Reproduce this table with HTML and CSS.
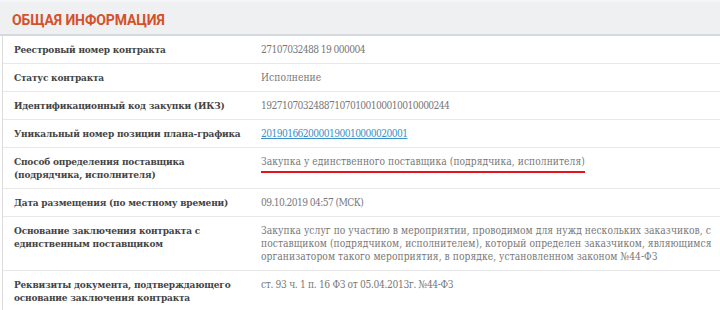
FILE: index.html
```html
<!DOCTYPE html>
<html lang="ru">
<head>
<meta charset="utf-8">
<title>Общая информация</title>
<link rel="stylesheet" href="styles.css">
</head>
<body>
<section class="card">
  <header class="card-head"><h2 class="card-title">ОБЩАЯ ИНФОРМАЦИЯ</h2></header>
  <div class="card-body">
    <div class="row">
      <div class="label">Реестровый номер контракта</div>
      <div class="value num">27107032488 19 000004</div>
    </div>
    <div class="row">
      <div class="label">Статус контракта</div>
      <div class="value">Исполнение</div>
    </div>
    <div class="row">
      <div class="label">Идентификационный код закупки (ИКЗ)</div>
      <div class="value num">192710703248871070100100010010000244</div>
    </div>
    <div class="row">
      <div class="label">Уникальный номер позиции плана-графика</div>
      <div class="value num"><a class="link" href="#">2019016620000190010000020001</a></div>
    </div>
    <div class="row">
      <div class="label">Способ определения поставщика<br>(подрядчика, исполнителя)</div>
      <div class="value"><span class="marked">Закупка у единственного поставщика (подрядчика, исполнителя)</span></div>
    </div>
    <div class="row">
      <div class="label">Дата размещения (по местному времени)</div>
      <div class="value num">09.10.2019 04:57 (МСК)</div>
    </div>
    <div class="row">
      <div class="label">Основание заключения контракта с<br>единственным поставщиком</div>
      <div class="value">Закупка услуг по участию в мероприятии, проводимом для нужд нескольких заказчиков, с<br>поставщиком (подрядчиком, исполнителем), который определен заказчиком, являющимся<br>организатором такого мероприятия, в порядке, установленном законом №44-ФЗ</div>
    </div>
    <div class="row">
      <div class="label">Реквизиты документа, подтверждающего<br>основание заключения контракта</div>
      <div class="value mixed">ст. 93 ч. 1 п. 16 ФЗ от 05.04.2013г. №44-ФЗ</div>
    </div>
  </div>
</section>
</body>
</html>
```
FILE: styles.css
```css
* { box-sizing: border-box; }
html, body { margin: 0; padding: 0; background: #ffffff; }
body { width: 720px; height: 310px; overflow: hidden; }

.card { width: 720px; }

.card-head {
  height: 36px;
  background: #eef0f2;
  border-top: 2px solid #f5f6f7;
  border-bottom: 2px solid #d6d9dd;
  display: flex;
  align-items: center;
  padding: 4px 12px 0;
}
.card-title {
  margin: 0;
  font-family: Roboto, "Noto Sans", sans-serif;
  font-weight: 700;
  font-size: 14px;
  color: #d4522a;
  letter-spacing: -0.1px;
}

.card-body {
  margin-left: 2px;
  border-left: 1px solid #dcdcdc;
}

.row {
  display: flex;
  border-bottom: 1px solid #e8e8e8;
  padding: 7px 0 7px;
  font-family: "DejaVu Serif", serif;
  font-stretch: condensed;
  font-size: 10.2px;
  line-height: 13px;
}

.label {
  width: 258px;
  flex: none;
  padding-left: 11px;
  font-weight: 700;
  font-size: 10px;
  letter-spacing: -0.2px;
  color: #444444;
}

.value {
  flex: 1;
  color: #787878;
  white-space: nowrap;
  letter-spacing: 0.05px;
}
.num { letter-spacing: -0.6px; }
.mixed { letter-spacing: -0.35px; }

.link { color: #3d8fc6; text-decoration: underline; }

.marked {
  display: inline-block;
  padding-bottom: 3px;
  border-bottom: 2px solid #e3121b;
}
```
